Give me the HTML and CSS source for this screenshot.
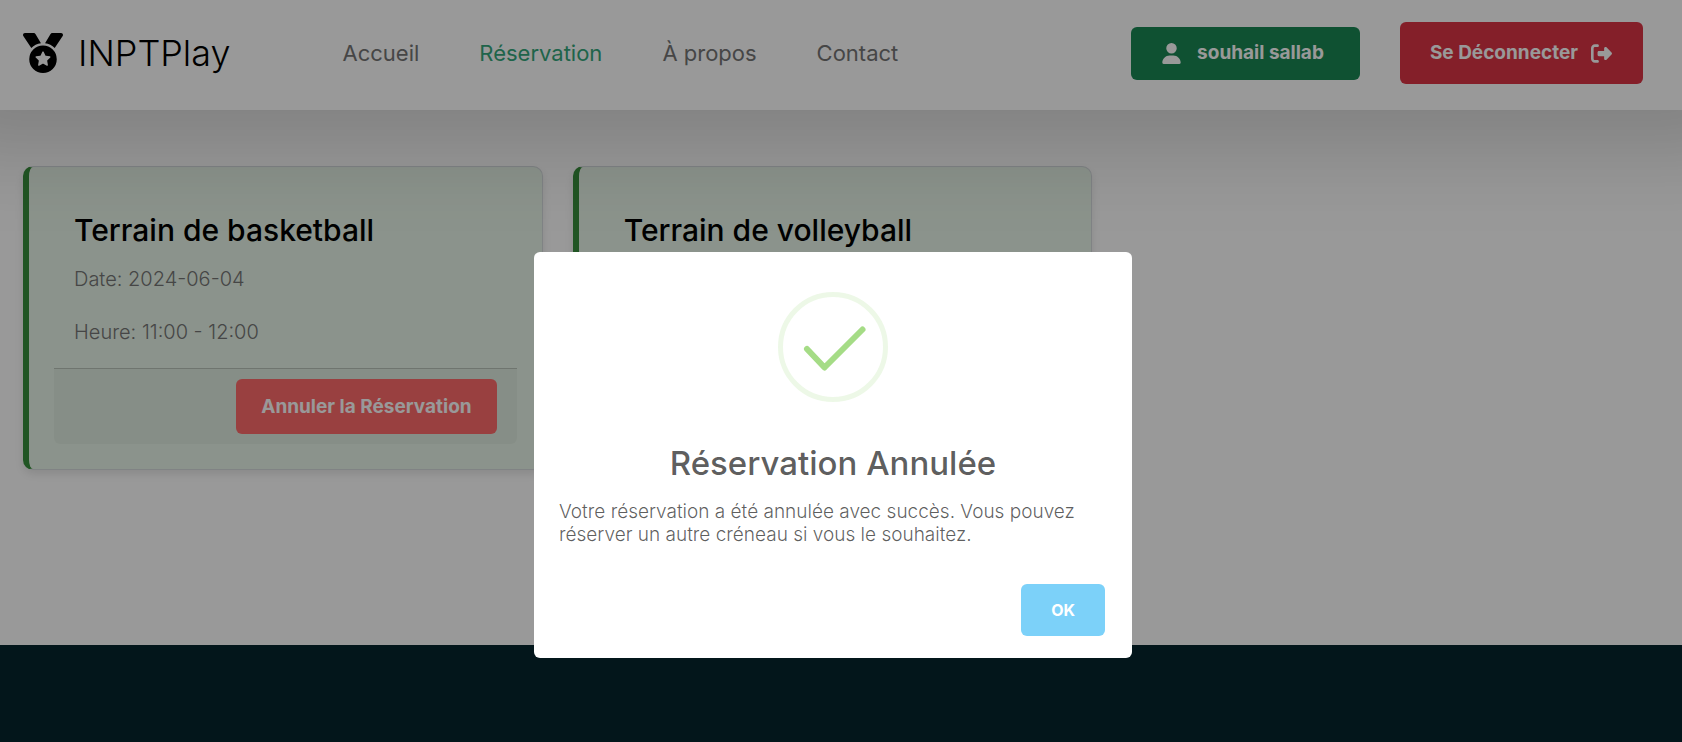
FILE: index.html
```html
<!DOCTYPE html>
<html lang="fr">
<head>
<meta charset="utf-8">
<meta name="viewport" content="width=device-width, initial-scale=1">
<title>INPTPlay - Réservation</title>
<link rel="stylesheet" href="styles.css">
</head>
<body>
<header class="header">
  <a class="brand" href="#">
    <svg class="brand-icon" viewBox="0 0 512 512" aria-hidden="true"><path d="M4.1 38.2C1.4 34.2 0 29.4 0 24.6C0 11 11 0 24.6 0H133.9c11.2 0 21.7 5.9 27.4 15.5l68.5 114.1c-48.2 6.1-91.3 28.6-123.4 61.9L4.1 38.2zm503.7 0L405.6 191.5c-32.1-33.3-75.2-55.8-123.4-61.9L350.7 15.5C356.5 5.9 366.9 0 378.1 0H487.4C501 0 512 11 512 24.6c0 4.8-1.4 9.6-4.1 13.6zM80 336a176 176 0 1 1 352 0A176 176 0 1 1 80 336zm184.4-94.9c-3.4-7-13.3-7-16.8 0l-22.4 45.4c-1.4 2.8-4 4.7-7 5.1L168 298.9c-7.7 1.1-10.7 10.5-5.2 16l36.3 35.4c2.2 2.2 3.2 5.2 2.7 8.3l-8.6 49.9c-1.3 7.6 6.7 13.5 13.6 9.9l44.8-23.6c2.7-1.4 6-1.4 8.7 0l44.8 23.6c6.9 3.6 14.9-2.2 13.6-9.9l-8.6-49.9c-.5-3 .5-6.1 2.7-8.3l36.3-35.4c5.6-5.4 2.5-14.8-5.2-16l-50.1-7.3c-3-.4-5.7-2.4-7-5.1l-22.4-45.4z"/></svg>
    <span>INPTPlay</span>
  </a>
  <nav class="nav">
    <a class="nav-link" href="#">Accueil</a>
    <a class="nav-link nav-link-active" href="#">Réservation</a>
    <a class="nav-link" href="#">À propos</a>
    <a class="nav-link" href="#">Contact</a>
  </nav>
  <div class="account">
    <button class="btn btn-user" type="button">
      <svg class="user-icon" viewBox="0 0 448 512" aria-hidden="true"><path d="M224 256A128 128 0 1 0 224 0a128 128 0 1 0 0 256zm-45.7 48C79.8 304 0 383.8 0 482.3C0 498.7 13.3 512 29.7 512H418.3c16.4 0 29.7-13.3 29.7-29.7C448 383.8 368.2 304 269.7 304H178.3z"/></svg>
      souhail sallab
    </button>
    <button class="btn btn-logout" type="button">
      Se Déconnecter
      <svg class="logout-icon" viewBox="0 0 512 512" aria-hidden="true"><path d="M377.9 105.9L500.7 228.7c7.2 7.2 11.3 17.1 11.3 27.3s-4.1 20.1-11.3 27.3L377.9 406.1c-6.4 6.4-15 9.9-24 9.9c-18.7 0-33.9-15.2-33.9-33.9l0-62.1-128 0c-17.7 0-32-14.3-32-32l0-64c0-17.7 14.3-32 32-32l128 0 0-62.1c0-18.7 15.2-33.9 33.9-33.9c9 0 17.6 3.6 24 9.9zM160 96L96 96c-17.7 0-32 14.3-32 32l0 256c0 17.7 14.3 32 32 32l64 0c17.7 0 32 14.3 32 32s-14.3 32-32 32l-64 0c-53 0-96-43-96-96L0 128C0 75 43 32 96 32l64 0c17.7 0 32 14.3 32 32s-14.3 32-32 32z"/></svg>
    </button>
  </div>
</header>

<main class="reservations">
  <article class="card">
    <div class="card-body">
      <h2 class="card-title">Terrain de basketball</h2>
      <p class="card-text">Date: 2024-06-04</p>
      <p class="card-text">Heure: 11:00 - 12:00</p>
    </div>
    <div class="card-footer">
      <button class="btn btn-cancel" type="button">Annuler la Réservation</button>
    </div>
  </article>
  <article class="card">
    <div class="card-body">
      <h2 class="card-title">Terrain de volleyball</h2>
    </div>
  </article>
</main>

<footer class="footer"></footer>

<div class="overlay">
  <div class="modal" role="dialog" aria-modal="true" aria-labelledby="modal-title" aria-describedby="modal-text">
    <svg class="modal-icon" viewBox="0 0 110 110" aria-hidden="true">
      <circle class="modal-ring" cx="55" cy="55" r="52.5"/>
      <path class="modal-check" d="M29 57L46.500 75.500L84.500 37.500"/>
    </svg>
    <h1 class="modal-title" id="modal-title">Réservation Annulée</h1>
    <p class="modal-text" id="modal-text">Votre réservation a été annulée avec succès. Vous pouvez réserver un autre créneau si vous le souhaitez.</p>
    <div class="modal-actions">
      <button class="btn btn-ok" type="button">OK</button>
    </div>
  </div>
</div>
</body>
</html>
```

FILE: styles.css
```css
* {
  box-sizing: border-box;
}

body {
  margin: 0;
  min-height: 100vh;
  display: flex;
  flex-direction: column;
  background: #fff;
  color: #000;
  font-family: Inter, Roboto, "Liberation Sans", sans-serif;
}

h1,
h2,
p {
  margin: 0;
}

a {
  color: inherit;
  text-decoration: none;
}

.header {
  position: relative;
  z-index: 1;
  display: flex;
  align-items: center;
  min-height: 110px;
  padding: 0 39px 4px 23px;
  background: #fff;
  box-shadow: 0 -30px 80px 70px rgba(0, 0, 0, 0.16);
}

.brand {
  display: flex;
  align-items: center;
  gap: 15px;
  font-size: 36px;
  font-weight: 300;
  line-height: 48px;
}

.brand-icon {
  width: 40px;
  height: 40px;
}

.nav {
  display: flex;
  gap: 60px;
  margin-left: 112px;
  color: #757575;
  font-size: 22px;
  line-height: 32px;
}

.nav-link-active {
  color: #35a77c;
}

.account {
  display: flex;
  align-items: center;
  gap: 40px;
  margin-left: auto;
}

.btn {
  display: flex;
  align-items: center;
  justify-content: center;
  border: 0;
  border-radius: 6px;
  color: #fff;
  font-family: inherit;
  font-size: 19px;
  font-weight: 700;
  line-height: 24px;
}

.btn svg {
  fill: currentColor;
}

.btn-user {
  gap: 16px;
  min-height: 53px;
  padding: 0 36px 0 31px;
  background: #198754;
}

.user-icon {
  width: 19px;
  height: 21px;
}

.btn-logout {
  gap: 13px;
  min-height: 62px;
  padding: 0 31px 0 30px;
  background: #dc3545;
}

.logout-icon {
  width: 21px;
  height: 21px;
}

.reservations {
  display: grid;
  grid-template-columns: repeat(3, 1fr);
  gap: 30px;
  padding: 56px 40px 175px 23px;
}

.card {
  padding: 25px;
  border: 1px solid #d5dadd;
  border-left: 6px solid #388e3c;
  border-radius: 10px;
  background: #e8f5e9;
  box-shadow: 0 4px 8px rgba(0, 0, 0, 0.1);
}

.card-body {
  display: grid;
  align-content: start;
  gap: 21px;
  padding: 20px;
}

.card-title {
  margin-bottom: -6px;
  font-size: 30px;
  font-weight: 500;
  line-height: 36px;
}

.card-text {
  color: #757575;
  font-size: 20px;
  font-weight: 300;
  line-height: 32px;
}

.card-footer {
  display: flex;
  justify-content: flex-end;
  padding: 10px 20px;
  border-top: 1px solid rgba(0, 0, 0, 0.176);
  border-radius: 0 0 6px 6px;
  background: rgba(0, 0, 0, 0.03);
}

.btn-cancel {
  min-height: 55px;
  padding: 0 25px;
  background: #ff6b6b;
}

.footer {
  flex: 1;
  min-height: 97px;
  background: #05262e;
}

.overlay {
  position: fixed;
  inset: 0;
  z-index: 2;
  display: grid;
  place-content: center;
  padding: 168px 16px 0 0;
  background: rgba(0, 0, 0, 0.4);
}

.modal {
  display: flex;
  flex-direction: column;
  width: 598px;
  max-width: 100%;
  padding: 40px 25px 22px;
  border-radius: 6px;
  background: #fff;
}

.modal-icon {
  align-self: center;
  width: 110px;
  height: 110px;
  fill: none;
}

.modal-ring {
  stroke: rgba(165, 220, 134, 0.2);
  stroke-width: 5;
}

.modal-check {
  stroke: #a5dc86;
  stroke-width: 6;
  stroke-linecap: round;
  stroke-linejoin: round;
}

.modal-title {
  margin-top: 40px;
  color: rgba(0, 0, 0, 0.65);
  font-size: 33px;
  font-weight: 500;
  line-height: 42px;
  text-align: center;
}

.modal-text {
  margin-top: 16px;
  color: rgba(0, 0, 0, 0.64);
  font-size: 19px;
  font-weight: 300;
  line-height: 23px;
}

.modal-actions {
  display: flex;
  justify-content: flex-end;
  margin-top: 38px;
}

.btn-ok {
  min-height: 52px;
  margin-right: 2px;
  padding: 0 30px;
  background: #7cd1f9;
  font-size: 16px;
}
```
